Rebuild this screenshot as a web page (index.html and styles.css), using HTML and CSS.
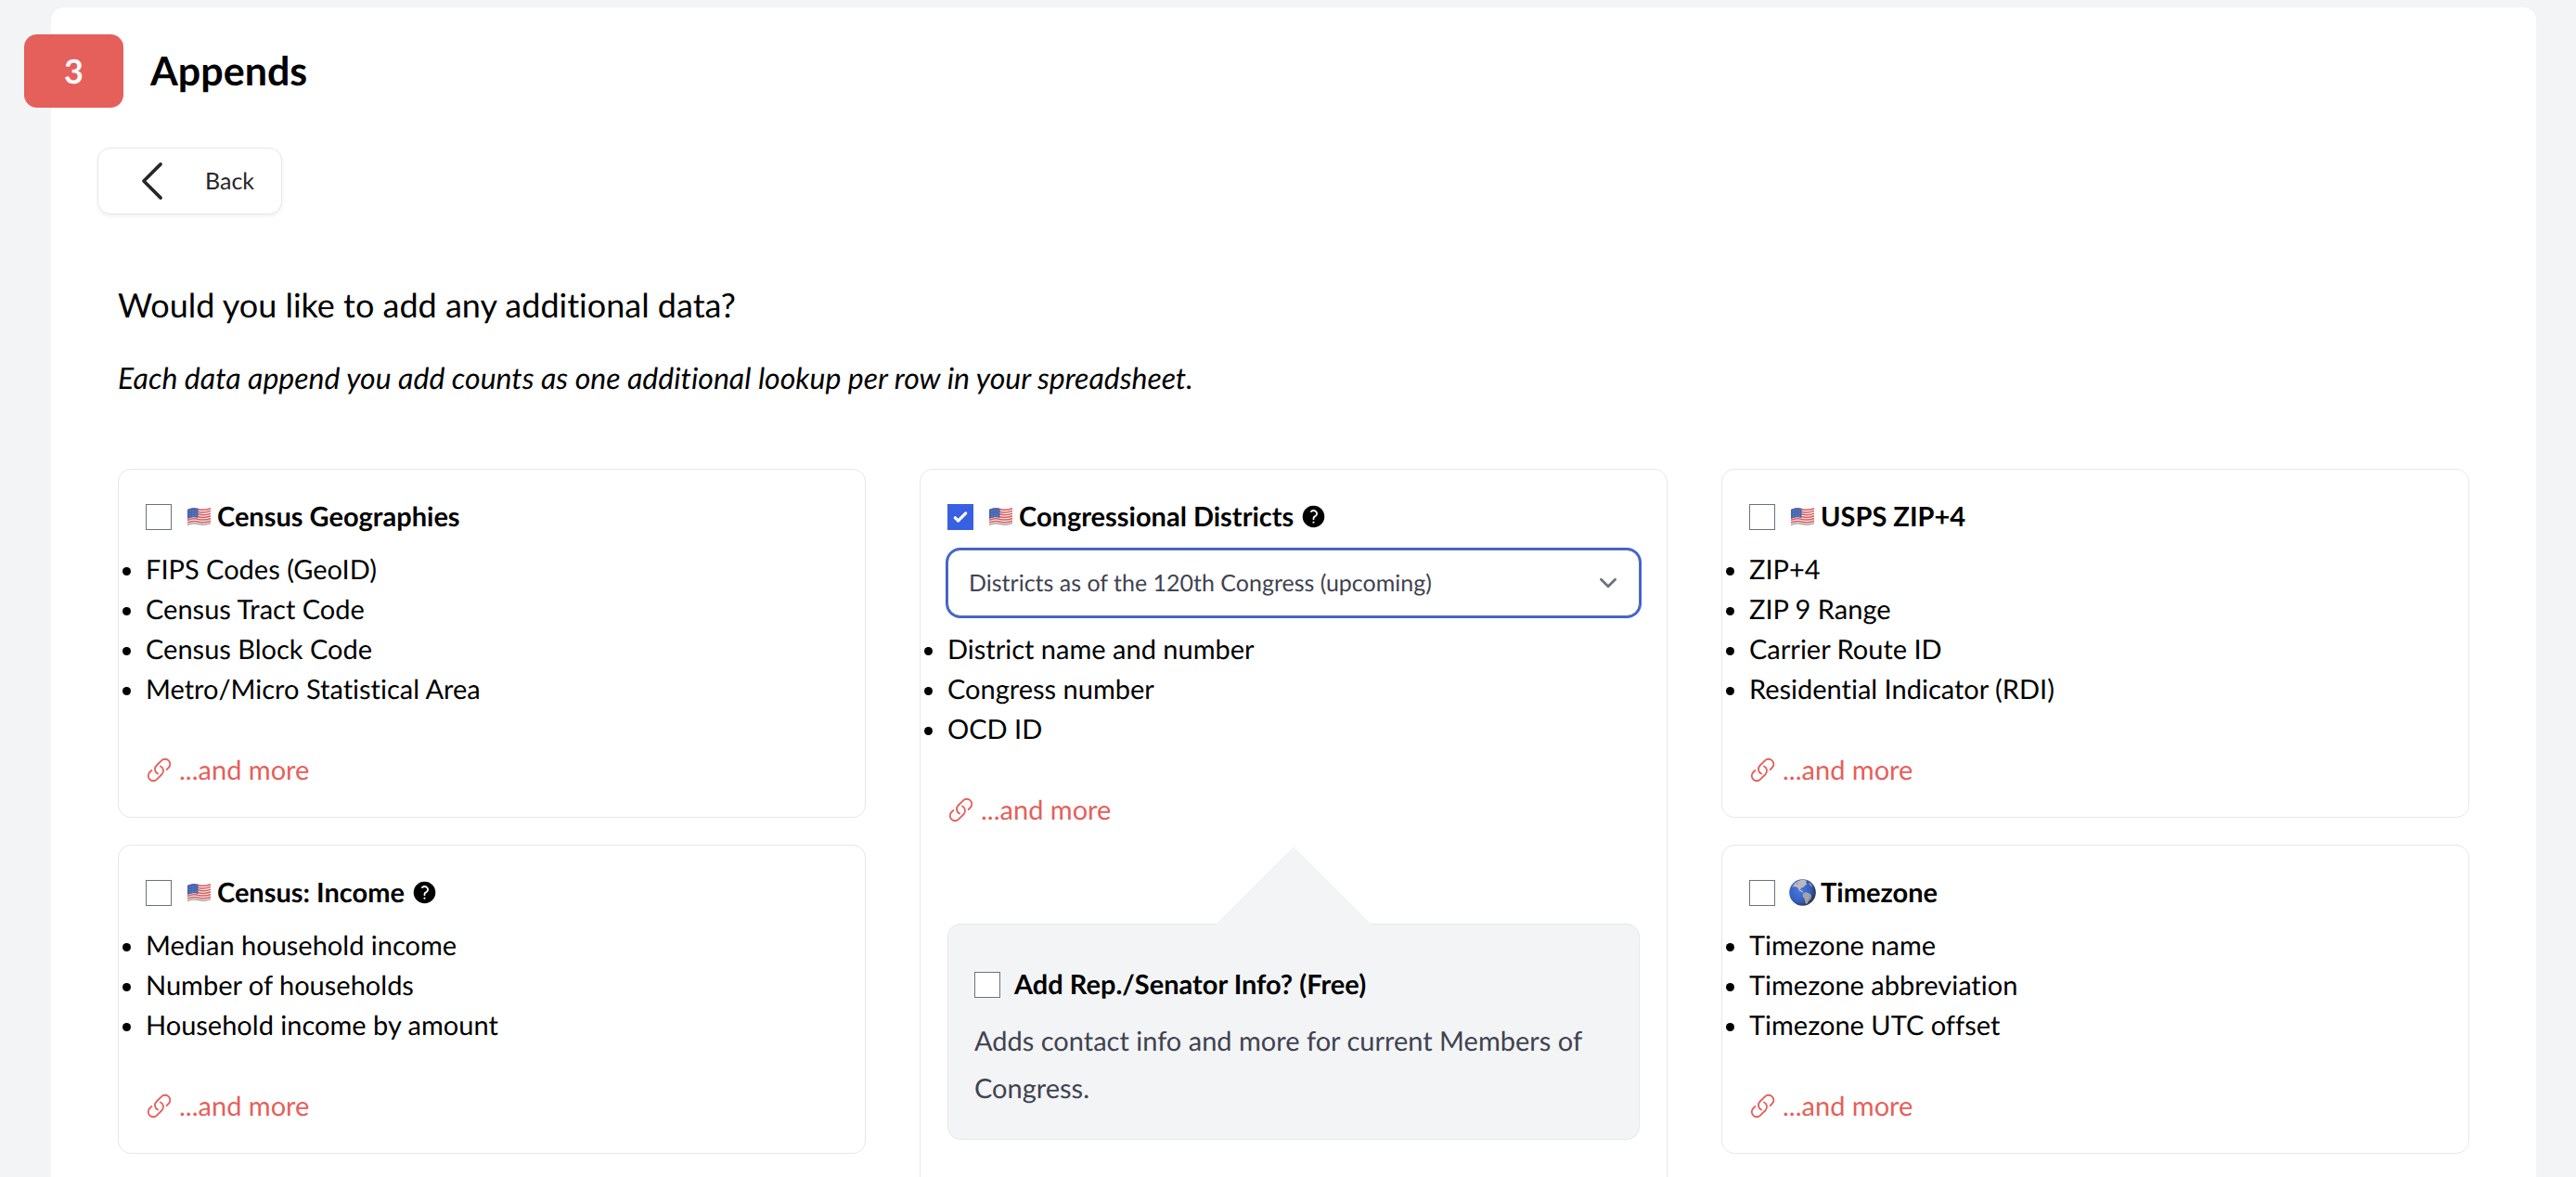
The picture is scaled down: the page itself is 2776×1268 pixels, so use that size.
FILE: index.html
```html
<!DOCTYPE html>
<html lang="en">
<head>
  <meta charset="UTF-8">
  <meta name="viewport" content="width=device-width, initial-scale=1.0">
  <title>Appends</title>
  <link rel="stylesheet" href="styles.css">
</head>
<body>
  <!-- Shared icons -->
  <svg class="sprite" aria-hidden="true">
    <symbol id="icon-flag" viewBox="0 0 29 29">
      <path fill="#f4eeee" d="M2 7c4-2 8-2 12-1s8 1 13-1v17c-5 2-9 2-13 1s-8-1-12 1z"/>
      <g fill="none" stroke="#dc5a5c" stroke-width="1.5">
        <path d="M2 7.700c4-2 8-2 12-1s8 1 13-1"/>
        <path d="M2 10.400c4-2 8-2 12-1s8 1 13-1"/>
        <path d="M2 13.100c4-2 8-2 12-1s8 1 13-1"/>
        <path d="M2 15.800c4-2 8-2 12-1s8 1 13-1"/>
        <path d="M2 18.500c4-2 8-2 12-1s8 1 13-1"/>
        <path d="M2 21.200c4-2 8-2 12-1s8 1 13-1"/>
      </g>
      <path fill="none" stroke="#8d8587" stroke-width="1" d="M2 23.600c4-2 8-2 12-1s8 1 13-1"/>
      <path fill="#4464ae" d="M2 7c4-2 8-2 11.500-1.200v10c-3.500-.8-7.500-.8-11.500 1.200z"/>
      <g fill="#9fb1dc">
        <circle cx="5" cy="8.500" r=".5"/><circle cx="8" cy="8" r=".5"/><circle cx="11" cy="8" r=".5"/>
        <circle cx="5" cy="11.500" r=".5"/><circle cx="8" cy="11" r=".5"/><circle cx="11" cy="11" r=".5"/>
        <circle cx="5" cy="14" r=".5"/><circle cx="8" cy="13.500" r=".5"/><circle cx="11" cy="13.500" r=".5"/>
      </g>
    </symbol>
    <symbol id="icon-globe" viewBox="0 0 29 29">
      <defs>
        <radialGradient id="ocean" cx=".38" cy=".42" r=".64">
          <stop offset="0" stop-color="#4a78dc"/>
          <stop offset=".65" stop-color="#355fc0"/>
          <stop offset="1" stop-color="#2b3346"/>
        </radialGradient>
      </defs>
      <circle cx="14.500" cy="14.500" r="14.300" fill="url(#ocean)"/>
      <path fill="#b9b9bd" d="M6 4.500c3-2.500 6-3.800 9.500-3.800l3.500 1-1 2.300 1.500 1.500-2.500 1.500-1.500 2-2.500.5-1 2 2.500 1.500 1.500 1.500-2-.3-3-1.700-2-3.500-4-1-2 1.500z"/>
      <path fill="#a3a3a8" d="M15 15.500l3-1.500 3.500 1.200 2.500 2.300-.5 3.500-2.500 2.500-2 3.500-1.500-1-.5-4-2.500-3.500z"/>
      <path fill="none" stroke="#cf6a6a" stroke-width=".8" d="M22.500 18.500l-1 3M8 5l2-.5"/>
      <path fill="#8f98ac" d="M21 3.200l3 2.600 1.500 3-2-1-2-2.300z"/>
    </symbol>
    <symbol id="icon-link" viewBox="0 0 24 24">
      <path fill="none" stroke="currentColor" stroke-width="1.500" stroke-linecap="round" stroke-linejoin="round" d="M13.190 8.688a4.500 4.500 0 0 1 1.242 7.244l-4.500 4.500a4.500 4.500 0 0 1-6.364-6.364l1.757-1.757m13.350-.622 1.757-1.757a4.500 4.500 0 0 0-6.364-6.364l-4.500 4.500a4.500 4.500 0 0 0 1.242 7.244"/>
    </symbol>
    <symbol id="icon-help" viewBox="0 0 24 24">
      <circle cx="12" cy="12" r="9.750" fill="currentColor"/>
      <path fill="none" stroke="#fff" stroke-width="1.500" stroke-linecap="round" stroke-linejoin="round" d="M9.879 7.519c1.171-1.025 3.071-1.025 4.242 0 1.172 1.025 1.172 2.687 0 3.712-.203.179-.43.326-.67.442-.745.361-1.450.999-1.450 1.827v.75"/>
      <circle cx="12" cy="17.200" r=".9" fill="#fff"/>
    </symbol>
  </svg>

  <main class="panel">
    <header class="step-header">
      <span class="step-number">3</span>
      <h1 class="step-title">Appends</h1>
    </header>

    <button type="button" class="back-button">
      <svg class="back-icon" viewBox="0 0 24 24" aria-hidden="true">
        <path fill="none" stroke="currentColor" stroke-width="1.500" stroke-linecap="round" stroke-linejoin="round" d="M15.750 19.500 8.250 12l7.500-7.500"/>
      </svg>
      Back
    </button>

    <section class="content">
      <h2 class="question">Would you like to add any additional data?</h2>
      <p class="note">Each data append you add counts as one additional lookup per row in your spreadsheet.</p>

      <div class="columns">
        <div class="column">
          <article class="card">
            <div class="card-header">
              <input type="checkbox" class="checkbox" id="census">
              <label for="census"><svg class="icon emoji"><use href="#icon-flag"/></svg>Census Geographies</label>
            </div>
            <ul class="fields">
              <li>FIPS Codes (GeoID)</li>
              <li>Census Tract Code</li>
              <li>Census Block Code</li>
              <li>Metro/Micro Statistical Area</li>
            </ul>
            <a class="more" href="#"><svg class="icon"><use href="#icon-link"/></svg>...and more</a>
          </article>

          <article class="card">
            <div class="card-header">
              <input type="checkbox" class="checkbox" id="income">
              <label for="income"><svg class="icon emoji"><use href="#icon-flag"/></svg>Census: Income</label>
              <svg class="icon help"><use href="#icon-help"/></svg>
            </div>
            <ul class="fields">
              <li>Median household income</li>
              <li>Number of households</li>
              <li>Household income by amount</li>
            </ul>
            <a class="more" href="#"><svg class="icon"><use href="#icon-link"/></svg>...and more</a>
          </article>
        </div>

        <div class="column">
          <article class="card">
            <div class="card-header">
              <input type="checkbox" class="checkbox" id="congress" checked>
              <label for="congress"><svg class="icon emoji"><use href="#icon-flag"/></svg>Congressional Districts</label>
              <svg class="icon help"><use href="#icon-help"/></svg>
            </div>
            <select class="select" aria-label="Congress">
              <option>Districts as of the 120th Congress (upcoming)</option>
            </select>
            <ul class="fields">
              <li>District name and number</li>
              <li>Congress number</li>
              <li>OCD ID</li>
            </ul>
            <a class="more" href="#"><svg class="icon"><use href="#icon-link"/></svg>...and more</a>

            <div class="callout">
              <div class="card-header">
                <input type="checkbox" class="checkbox" id="reps">
                <label for="reps">Add Rep./Senator Info? (Free)</label>
              </div>
              <p class="callout-text">Adds contact info and more for current Members of Congress.</p>
            </div>
          </article>
        </div>

        <div class="column">
          <article class="card">
            <div class="card-header">
              <input type="checkbox" class="checkbox" id="zip4">
              <label for="zip4"><svg class="icon emoji"><use href="#icon-flag"/></svg>USPS ZIP+4</label>
            </div>
            <ul class="fields">
              <li>ZIP+4</li>
              <li>ZIP 9 Range</li>
              <li>Carrier Route ID</li>
              <li>Residential Indicator (RDI)</li>
            </ul>
            <a class="more" href="#"><svg class="icon"><use href="#icon-link"/></svg>...and more</a>
          </article>

          <article class="card">
            <div class="card-header">
              <input type="checkbox" class="checkbox" id="timezone">
              <label for="timezone"><svg class="icon emoji"><use href="#icon-globe"/></svg>Timezone</label>
            </div>
            <ul class="fields">
              <li>Timezone name</li>
              <li>Timezone abbreviation</li>
              <li>Timezone UTC offset</li>
            </ul>
            <a class="more" href="#"><svg class="icon"><use href="#icon-link"/></svg>...and more</a>
          </article>
        </div>
      </div>
    </section>
  </main>
</body>
</html>
```

FILE: styles.css
```css
* {
  box-sizing: border-box;
}
body {
  margin: 0;
  padding: 8px 43px 0 55px;
  background: #f3f4f6;
  color: #000;
  font-family: Lato, 'Open Sans', sans-serif;
  font-size: 29px;
  line-height: 43px;
  font-variant-ligatures: none;
  text-rendering: geometricPrecision;
}
h1, h2, p, ul {
  margin: 0;
  padding: 0;
}
.sprite {
  position: absolute;
  width: 0;
  height: 0;
}
.panel {
  background: #fff;
  border-radius: 14px;
  padding: 29px 0 72px;
}

/* Step header */
.step-header {
  display: flex;
  align-items: center;
  gap: 29px;
  margin-left: -29px;
}
.step-number {
  display: flex;
  align-items: center;
  justify-content: center;
  width: 107px;
  height: 79px;
  border-radius: 14px;
  background: #e55f5b;
  color: #fff;
  font-size: 36px;
  font-weight: 700;
}
.step-title {
  font-size: 43px;
  font-weight: 700;
}
.back-button {
  display: flex;
  align-items: center;
  gap: 28px;
  height: 72px;
  margin: 43px 0 0 50px;
  padding: 0 29px;
  border: 1px solid #e5e7eb;
  border-radius: 14px;
  background: #fff;
  box-shadow: 0 2px 4px rgba(0, 0, 0, 0.06);
  color: #27272a;
  font-family: inherit;
  font-size: 25px;
  font-variant-ligatures: inherit;
  text-rendering: inherit;
  cursor: pointer;
}
.back-icon {
  width: 58px;
  height: 58px;
}

/* Content */
.content {
  padding: 72px 72px 0;
}
.question {
  font-size: 36px;
  font-weight: 400;
  line-height: 50px;
}
.note {
  margin-top: 29px;
  font-size: 32px;
  font-style: italic;
  line-height: 50px;
}
.columns {
  display: grid;
  grid-template-columns: repeat(3, 1fr);
  gap: 58px;
  margin-top: 73px;
}
.column {
  display: flex;
  flex-direction: column;
  gap: 29px;
}
.card {
  padding: 29px;
  border: 1px solid #e5e7eb;
  border-radius: 14px;
}
.card-header {
  display: flex;
  align-items: center;
  margin-bottom: 14px;
  font-weight: 700;
}
.card-header label {
  display: flex;
  align-items: center;
  margin-left: 15px;
}
.icon {
  flex: none;
  width: 29px;
  height: 29px;
}
.emoji {
  margin-right: 5px;
}
.help {
  margin-left: 7px;
}
.checkbox {
  appearance: none;
  flex: none;
  width: 28px;
  height: 28px;
  margin: 0;
  border: 1px solid #6b7280;
  background: #fff;
}
.checkbox:checked {
  border-color: #3860e2;
  background: #3860e2 url("data:image/svg+xml,%3Csvg viewBox='0 0 16 16' fill='white' xmlns='http://www.w3.org/2000/svg'%3E%3Cpath d='M12.207 4.793a1 1 0 010 1.414l-5 5a1 1 0 01-1.414 0l-2-2a1 1 0 011.414-1.414L6.500 9.086l4.293-4.293a1 1 0 011.414 0z'/%3E%3C/svg%3E") center / 100% no-repeat;
}
.select {
  appearance: none;
  display: block;
  width: 100%;
  height: 72px;
  margin-bottom: 14px;
  padding: 0 72px 0 22px;
  border: 1px solid #6b7280;
  border-radius: 14px;
  box-shadow: 0 0 0 2px #3860e2;
  background: #fff url("data:image/svg+xml,%3Csvg xmlns='http://www.w3.org/2000/svg' fill='none' viewBox='0 0 20 20'%3E%3Cpath stroke='%236b7280' stroke-linecap='round' stroke-linejoin='round' stroke-width='1.500' d='M6 8l4 4 4-4'/%3E%3C/svg%3E") right 14px center / 38px no-repeat;
  color: #3f4350;
  font-family: inherit;
  font-size: 25px;
  font-variant-ligatures: inherit;
  text-rendering: inherit;
}
.fields li {
  line-height: 43px;
}
.more {
  display: flex;
  align-items: center;
  gap: 7px;
  width: max-content;
  margin-top: 44px;
  color: #e55f5b;
  text-decoration: none;
}

/* Nested option, with an arrow pointing up at its parent */
.callout {
  position: relative;
  margin: 101px 0 43px;
  padding: 43px 28px 29px;
  border: 1px solid #e5e7eb;
  border-radius: 14px;
  background: #f3f4f6;
}
.callout::before {
  content: "";
  position: absolute;
  left: 50%;
  bottom: 100%;
  width: 170px;
  height: 85px;
  margin: 0 0 -1px -85px;
  background: #f3f4f6;
  clip-path: polygon(50% 0, 100% 100%, 0 100%);
}
.callout-text {
  color: #3f4350;
  line-height: 51px;
}
```
